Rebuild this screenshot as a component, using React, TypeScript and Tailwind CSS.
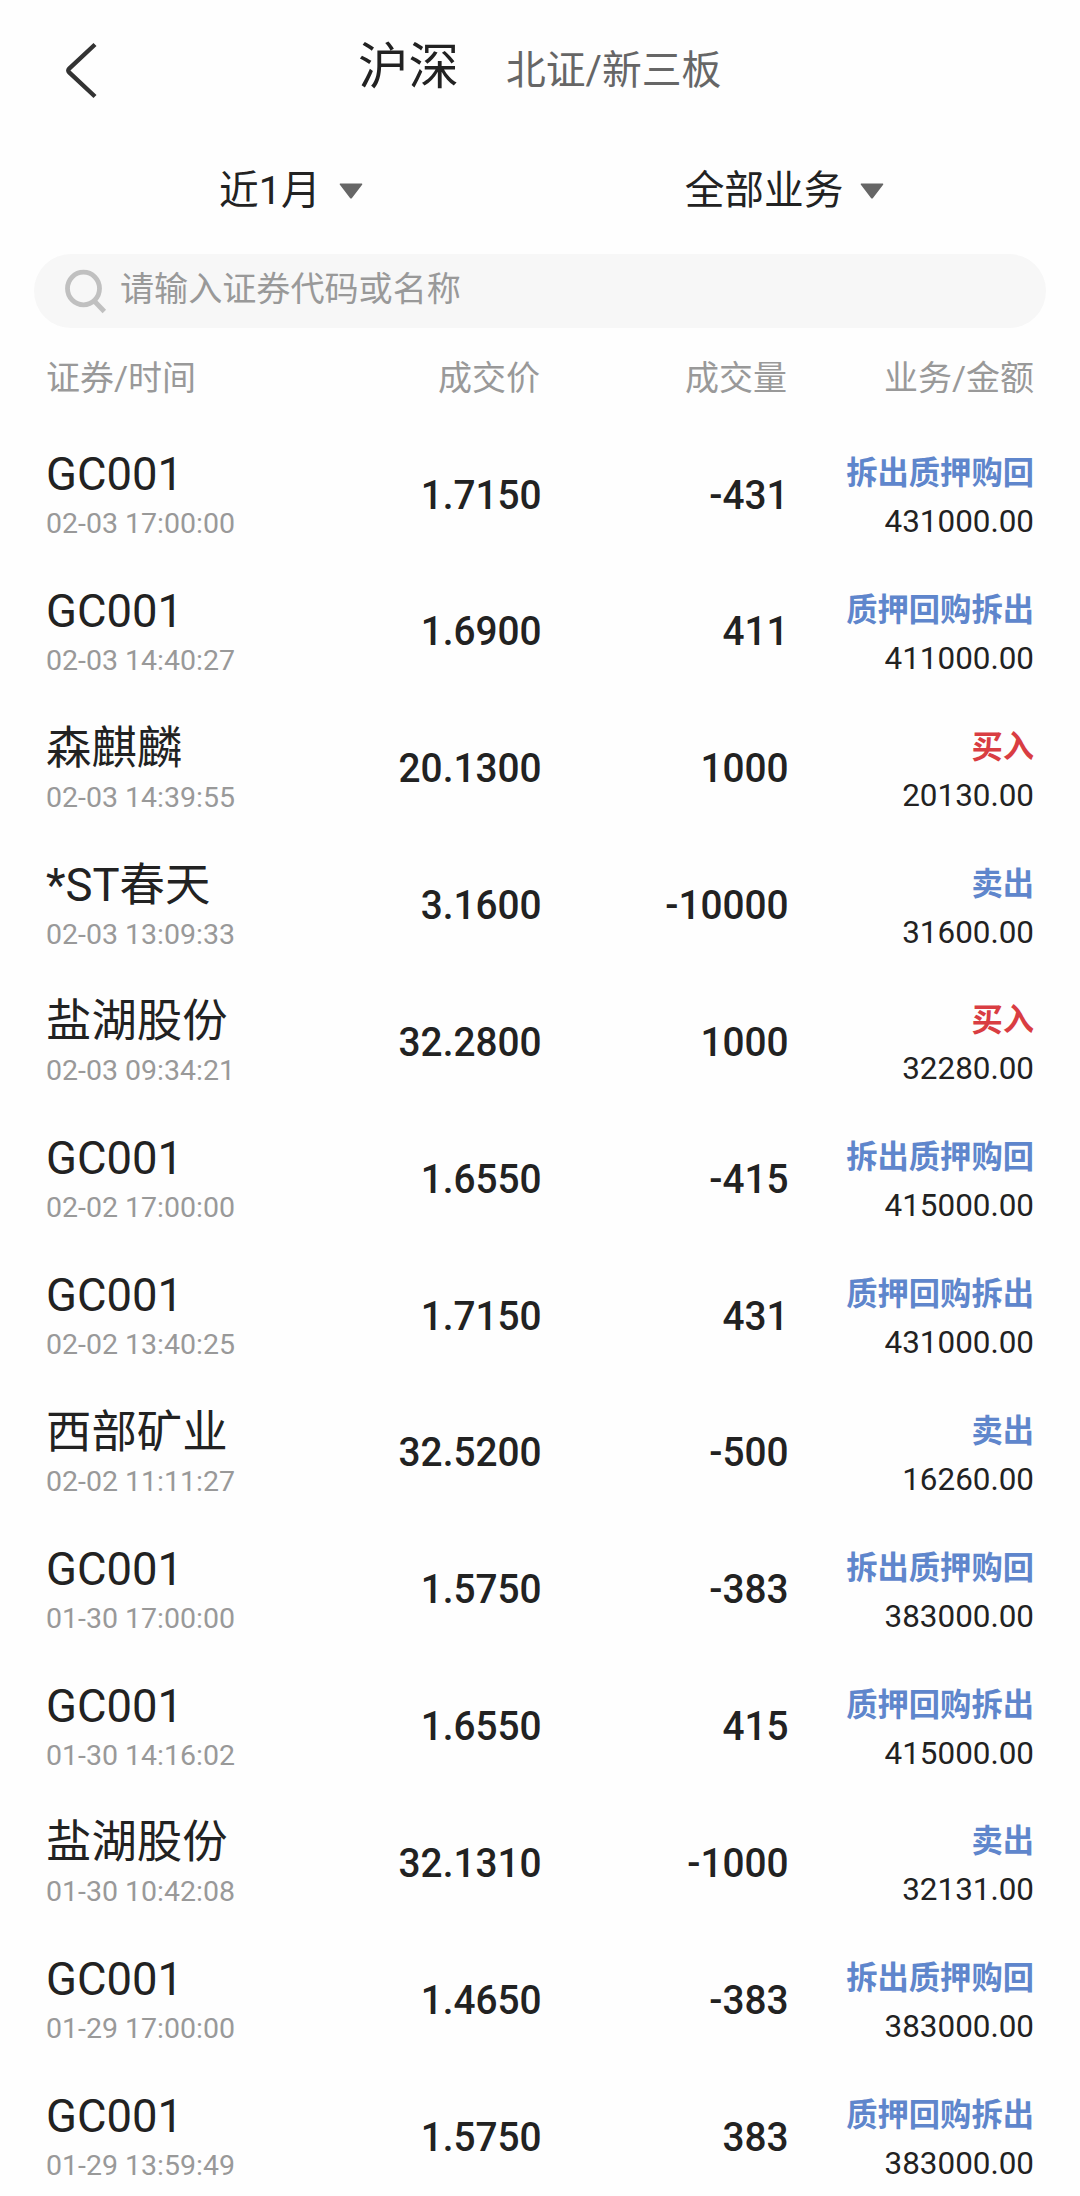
type Side = "buy" | "sell";

interface Deal {
  name: string;
  time: string;
  price: string;
  volume: string;
  business: string;
  side: Side;
  amount: string;
}

const deals: Deal[] = [
  { name: "GC001", time: "02-03 17:00:00", price: "1.7150", volume: "-431", business: "拆出质押购回", side: "sell", amount: "431000.00" },
  { name: "GC001", time: "02-03 14:40:27", price: "1.6900", volume: "411", business: "质押回购拆出", side: "sell", amount: "411000.00" },
  { name: "森麒麟", time: "02-03 14:39:55", price: "20.1300", volume: "1000", business: "买入", side: "buy", amount: "20130.00" },
  { name: "*ST春天", time: "02-03 13:09:33", price: "3.1600", volume: "-10000", business: "卖出", side: "sell", amount: "31600.00" },
  { name: "盐湖股份", time: "02-03 09:34:21", price: "32.2800", volume: "1000", business: "买入", side: "buy", amount: "32280.00" },
  { name: "GC001", time: "02-02 17:00:00", price: "1.6550", volume: "-415", business: "拆出质押购回", side: "sell", amount: "415000.00" },
  { name: "GC001", time: "02-02 13:40:25", price: "1.7150", volume: "431", business: "质押回购拆出", side: "sell", amount: "431000.00" },
  { name: "西部矿业", time: "02-02 11:11:27", price: "32.5200", volume: "-500", business: "卖出", side: "sell", amount: "16260.00" },
  { name: "GC001", time: "01-30 17:00:00", price: "1.5750", volume: "-383", business: "拆出质押购回", side: "sell", amount: "383000.00" },
  { name: "GC001", time: "01-30 14:16:02", price: "1.6550", volume: "415", business: "质押回购拆出", side: "sell", amount: "415000.00" },
  { name: "盐湖股份", time: "01-30 10:42:08", price: "32.1310", volume: "-1000", business: "卖出", side: "sell", amount: "32131.00" },
  { name: "GC001", time: "01-29 17:00:00", price: "1.4650", volume: "-383", business: "拆出质押购回", side: "sell", amount: "383000.00" },
  { name: "GC001", time: "01-29 13:59:49", price: "1.5750", volume: "383", business: "质押回购拆出", side: "sell", amount: "383000.00" },
];

const columns = "grid grid-cols-[300px_194px_247px_247px] px-[46px]";

function Caret() {
  return (
    <svg className="h-4 w-6" viewBox="0 0 24 16" fill="#666666">
      <path d="M1.5 0.5h21c.8 0 1.1.7.6 1.3L13 14.9c-.6.7-1.4.7-2 0L.9 1.8C.4 1.2.7.5 1.5.5z" />
    </svg>
  );
}

function Header() {
  return (
    <header className="flex h-[134px] items-start">
      <button className="mt-[41px] ml-[64px] h-[60px] w-[36px]" aria-label="返回">
        <svg className="h-[60px] w-[36px]" viewBox="0 0 36 60" fill="none" stroke="#333333" strokeWidth="4.4">
          <path d="M31 3.5 5.2 27.6q-1.9 1.9 0 3.8L31 55.5" />
        </svg>
      </button>
      <nav className="mt-8 ml-[258px] flex items-baseline gap-[47px]">
        <span className="text-[50.5px] leading-[70px] text-[#222222]">沪深</span>
        <span className="text-[39.8px] leading-[56px] text-[#666666]">北证/新三板</span>
      </nav>
    </header>
  );
}

function Filters() {
  return (
    <div className="flex h-[120px] text-[39.7px] leading-[56px] text-[#222222]">
      <button className="mt-[29px] ml-[219px] flex h-[56px] items-center">
        近1月
        <span className="ml-[18px]">
          <Caret />
        </span>
      </button>
      <button className="mt-[29px] ml-[322px] flex h-[56px] items-center">
        全部业务
        <span className="ml-[17px]">
          <Caret />
        </span>
      </button>
    </div>
  );
}

function SearchBar() {
  return (
    <div className="mx-[34px] flex h-[74px] items-center rounded-full bg-[#f7f7f7] pl-[30px]">
      <svg className="h-[46px] w-[44px]" viewBox="0 0 44 46" fill="none" stroke="#c0c0c0" strokeWidth="4.8">
        <ellipse cx="19.5" cy="20.5" rx="16" ry="16.3" />
        <path d="M29.8 32.5 40.3 43.5" />
      </svg>
      <span className="mb-[5px] ml-[12px] text-[34.1px] leading-[48px] text-[#999999]">请输入证券代码或名称</span>
    </div>
  );
}

// condensed a little so the digits keep a narrow, upright look
function Figure({ value }: { value: string }) {
  return (
    <p className="-mr-[1.5px] origin-right scale-x-[0.945] pt-[40px] text-right text-[41px] leading-[56px] font-medium text-[#222222]">
      {value}
    </p>
  );
}

function DealRow({ deal }: { deal: Deal }) {
  return (
    <li className={`${columns} h-[136.83px]`}>
      <div className="pt-[20.5px]">
        <p className="text-[45.4px] leading-[56px] whitespace-nowrap text-[#222222]">{deal.name}</p>
        <p className="mt-[4px] text-[28.5px] leading-[34px] whitespace-nowrap text-[#999999]">{deal.time}</p>
      </div>
      <Figure value={deal.price} />
      <Figure value={deal.volume} />
      <div className="pt-[27.5px] text-right">
        <p
          className={`text-[31.3px] leading-[40px] font-bold whitespace-nowrap ${
            deal.side === "buy" ? "text-[#d93d42]" : "text-[#5f86cc]"
          }`}
        >
          {deal.business}
        </p>
        <p className="mt-[10px] text-[31.4px] leading-[36px] text-[#222222]">{deal.amount}</p>
      </div>
    </li>
  );
}

export default function App() {
  return (
    <div className="h-[2196px] w-[1080px] overflow-hidden bg-[#fefefe] font-['Roboto','Noto_Sans_CJK_SC',sans-serif]">
      <Header />
      <Filters />
      <SearchBar />
      <div className={`${columns} mt-[26px] mb-[24.6px] text-[34px] leading-[48px] text-[#999999]`}>
        <span>证券/时间</span>
        <span className="text-right">成交价</span>
        <span className="text-right">成交量</span>
        <span className="text-right">业务/金额</span>
      </div>
      <ul>
        {deals.map((deal) => (
          <DealRow key={deal.time} deal={deal} />
        ))}
      </ul>
    </div>
  );
}
